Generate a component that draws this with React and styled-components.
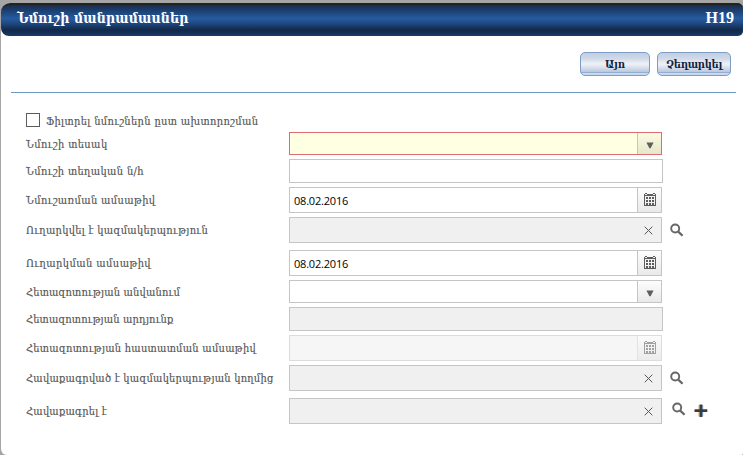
import React from "react";
import styled, { createGlobalStyle, css } from "styled-components";

const armenian = '"DejaVu Serif Condensed", "DejaVu Serif", serif';

const GlobalStyle = createGlobalStyle`
  * { box-sizing: border-box; }
  html { height: 100%; overflow: hidden; }
  body { margin: 0; height: 455px; overflow: hidden; background: #a5a5a5; }
`;

const Dialog = styled.main`
  margin: 3px 0 0 1px;
  height: 452px;
  background: #fff;
  border-radius: 9px 5px 2px 6px;
`;

const TitleBar = styled.header`
  display: flex;
  justify-content: space-between;
  height: 33px;
  padding: 0 9px 0 16px;
  border-top: 2px solid #222;
  border-radius: 9px 5px 5px 8px;
  color: #fff;
  background: linear-gradient(#182d4c 0, #1d4479 22%, #265b9f 43%, #1f4a84 58%, #14294a 80%, #152c50 87%, #1a3c6d 100%);
`;

const Title = styled.h1`
  margin: 0;
  font: bold 14px/26px ${armenian};
  letter-spacing: 0.17px;
`;

const Code = styled.span`
  font: bold 16px/26px "Liberation Serif", serif;
`;

const Toolbar = styled.div`
  display: flex;
  justify-content: flex-end;
  gap: 7px;
  height: 57px;
  margin: 0 7px 0 10px;
  padding: 16px 5px 0 0;
  border-bottom: 1px solid #6d96c0;
`;

const Button = styled.button`
  width: ${(p) => p.$width}px;
  height: 24px;
  padding: 1px 0 0;
  border: 1px solid #7d9dc6;
  border-radius: 5px;
  color: #14233f;
  background: linear-gradient(#c2cee1 0, #d0d9e7 25%, #eef2f7 50%, #dfe5ef 62%, #bac7dd 86%, #7fa3d0 87%, #a9c0de 91%, #d2dceb 92%, #c5d3e7 100%);
  font: bold 11px/22px ${armenian};
  letter-spacing: ${(p) => p.$tracking || 0}px;
`;

const Form = styled.form`
  padding: 20px 0 0 25px;
`;

const CheckRow = styled.label`
  display: flex;
  align-items: center;
  gap: 6px;
  height: 14px;
  margin-bottom: 5px;
`;

const Checkbox = styled.input`
  appearance: none;
  width: 14px;
  height: 14px;
  margin: 0;
  border: 1px solid #5c5c5c;
  background: #fff;
`;

const Label = styled.span`
  padding-top: ${(p) => p.$drop ?? 2}px;
  color: #555;
  font: 11px/14px ${armenian};
  letter-spacing: ${(p) => p.$tracking}px;
  white-space: nowrap;
  -webkit-text-stroke: 0.15px #555;
`;

const Row = styled.div`
  display: grid;
  grid-template-columns: 263px 374px 1fr;
  grid-template-rows: 100%;
  align-items: center;
  height: ${(p) => p.$height}px;
  margin-bottom: ${(p) => p.$gap}px;
`;

const tones = {
  normal: css`border-color: #c5c5c5; background: #fff;`,
  required: css`border-color: #de6b70; background: #ffffe1;`,
  readonly: css`border-color: #c5c5c5; background: #f0f0f0;`,
  disabled: css`border-color: #dcdcdc; background: #f6f6f6;`,
};

const Field = styled.div`
  display: flex;
  justify-content: space-between;
  width: ${(p) => (p.$wide ? 374 : 373)}px;
  height: 100%;
  border: 1px solid;
  ${(p) => tones[p.$tone]}
`;

const Value = styled.span`
  padding-left: 4px;
  color: #000;
  font: 11px/25px "Open Sans", sans-serif;
  height: 100%;
  letter-spacing: -0.2px;
`;

const Trigger = styled.span`
  display: flex;
  flex: none;
  justify-content: center;
  width: 24px;
  padding: ${(p) => (p.$kind === "select" ? "9px 0 0" : "4px 0 0")};
  border-left: 1px solid ${(p) => (p.$tone === "disabled" ? "#dcdcdc" : "#c5c5c5")};
  background: ${(p) =>
    p.$tone === "required"
      ? "linear-gradient(#fcfce2, #e6e6cd)"
      : "linear-gradient(#fdfdfd, #e9e9e9)"};
  opacity: ${(p) => (p.$tone === "disabled" ? 0.75 : 1)};
`;

const Clear = styled.span`
  display: flex;
  align-items: center;
  padding-right: 8px;
`;

const Actions = styled.div`
  display: flex;
  align-self: start;
  gap: 8px;
  padding: ${(p) => (p.$shifted ? "4px 0 0 9px" : "6px 0 0 7px")};
`;

const PlusIcon = styled.svg`
  margin-top: 2px;
`;

function Calendar({ muted }) {
  const c = muted ? "#858585" : "#5c5c5c";
  return (
    <svg width="12" height="15" viewBox="0 0 12 15" shapeRendering="crispEdges">
      <path d="M0 2h12v12H0zM1 5v8h10V5z" fill={c} fillRule="evenodd" />
      <path d="M1 2h2v1H1zM9 2h2v1H9z" fill="#eee" />
      <path d="M1 1h2v1H1zM9 1h2v1H9zM3 2h1v1H3zM8 2h1v1H8z" fill={c} />
      {[5, 8, 11].map((y) =>
        [2, 5, 8].map((x) => (
          <rect key={`${x}-${y}`} x={x} y={y} width="2" height="2" fill={c} />
        ))
      )}
      <path d="M1 4h10v1H1z" fill="#f1f1f1" />
    </svg>
  );
}

function Arrow() {
  return (
    <svg width="8" height="7" viewBox="0 0 8 7">
      <path d="M.4.4h7.2L4.6 6.3H3.4z" fill="#5e5e5e" />
    </svg>
  );
}

function Cross() {
  return (
    <svg width="9" height="9" viewBox="0 0 9 9">
      <path d="M.7.7l7.6 7.6M8.3.7L.7 8.3" stroke="#555" strokeWidth="1" />
    </svg>
  );
}

function Magnifier() {
  return (
    <svg width="14" height="14" viewBox="0 0 14 14">
      <circle cx="5.2" cy="5.5" r="4" fill="none" stroke="#666" strokeWidth="1.9" />
      <path d="M8.2 8.6l4.4 4.2" stroke="#666" strokeWidth="2.2" />
    </svg>
  );
}

function Plus() {
  return (
    <PlusIcon width="14" height="14" viewBox="0 0 14 14">
      <path d="M5 1v11.5M.6 5.5v2.5" stroke="#d79a66" strokeWidth="1" />
      <path d="M8.7 1v11.5M13.2 5.5v2.5" stroke="#66a7e8" strokeWidth="1" />
      <path d="M6.9.4v12.6M.8 6.7h12.2" stroke="#3c3c3c" strokeWidth="2.7" />
    </PlusIcon>
  );
}

const rows = [
  { label: "Նմուշի տեսակ", tracking: 0.39, height: 23, gap: 4, kind: "select", tone: "required" },
  { label: "Նմուշի տեղական ն/հ", tracking: 0.36, height: 24, gap: 4, wide: true },
  { label: "Նմուշառման ամսաթիվ", tracking: 0.36, height: 26, gap: 4, kind: "date", value: "08.02.2016" },
  { label: "Ուղարկվել է կազմակերպություն", tracking: 0.3, height: 26, gap: 7, kind: "lookup", tone: "readonly" },
  { label: "Ուղարկման ամսաթիվ", tracking: 0.41, height: 26, gap: 4, kind: "date", value: "08.02.2016" },
  { label: "Հետազոտության անվանում", tracking: 0.16, height: 23, gap: 4, kind: "select" },
  { label: "Հետազոտության արդյունք", tracking: 0.12, height: 24, gap: 4, wide: true, tone: "readonly" },
  { label: "Հետազոտության հաստատման ամսաթիվ", tracking: 0.25, height: 26, gap: 4, kind: "date", tone: "disabled" },
  { label: "Հավաքագրված է կազմակերպության կողմից", tracking: 0.23, height: 26, gap: 7, kind: "lookup", tone: "readonly" },
  { label: "Հավաքագրել է", tracking: 0.21, height: 26, gap: 0, kind: "lookup", tone: "readonly", addable: true },
];

function FormRow({ label, tracking, height, gap, kind, value, wide, addable, tone = "normal" }) {
  return (
    <Row $height={height} $gap={gap}>
      <Label $tracking={tracking}>{label}</Label>
      <Field $tone={tone} $wide={wide}>
        <Value>{value}</Value>
        {kind === "lookup" && <Clear><Cross /></Clear>}
        {kind === "select" && <Trigger $kind={kind} $tone={tone}><Arrow /></Trigger>}
        {kind === "date" && (
          <Trigger $kind={kind} $tone={tone}><Calendar muted={tone === "disabled"} /></Trigger>
        )}
      </Field>
      {kind === "lookup" && (
        <Actions $shifted={addable}>
          <Magnifier />
          {addable && <Plus />}
        </Actions>
      )}
    </Row>
  );
}

export default function App() {
  return (
    <>
      <GlobalStyle />
      <Dialog>
        <TitleBar>
          <Title>Նմուշի մանրամասներ</Title>
          <Code>H19</Code>
        </TitleBar>
        <Toolbar>
          <Button type="button" $width={70}>Այո</Button>
          <Button type="button" $width={74} $tracking={-0.3}>Չեղարկել</Button>
        </Toolbar>
        <Form>
          <CheckRow>
            <Checkbox type="checkbox" />
            <Label $tracking={0.35} $drop={4}>Ֆիլտրել նմուշներն ըստ ախտորոշման</Label>
          </CheckRow>
          {rows.map((row) => (
            <FormRow key={row.label} {...row} />
          ))}
        </Form>
      </Dialog>
    </>
  );
}
